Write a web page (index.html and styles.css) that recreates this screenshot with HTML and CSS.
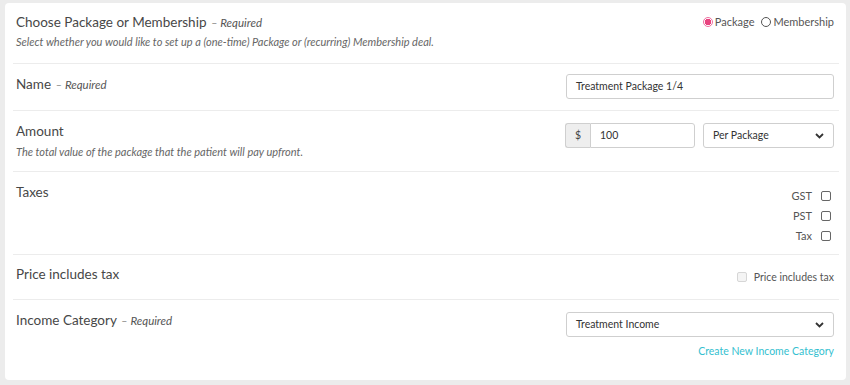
FILE: index.html
```html
<!DOCTYPE html>
<html>
<head>
<meta charset="utf-8">
<link rel="stylesheet" href="styles.css">
</head>
<body>
<div class="card">
  <div class="row row-type">
    <div class="left">
      <div class="title">Choose Package or Membership <span class="req">– Required</span></div>
      <div class="hint">Select whether you would like to set up a (one-time) Package or (recurring) Membership deal.</div>
    </div>
    <div class="right radios">
      <label class="radio"><span class="dot on"></span>Package</label>
      <label class="radio"><span class="dot"></span>Membership</label>
    </div>
  </div>

  <div class="row row-name">
    <div class="left">
      <div class="title">Name <span class="req">– Required</span></div>
    </div>
    <div class="right">
      <div class="input wide">Treatment Package 1/4</div>
    </div>
  </div>

  <div class="row row-amount">
    <div class="left">
      <div class="title">Amount</div>
      <div class="hint">The total value of the package that the patient will pay upfront.</div>
    </div>
    <div class="right amount">
      <div class="group">
        <span class="addon">$</span>
        <span class="input money">100</span>
      </div>
      <div class="input select per">Per Package
        <svg class="chev" width="9" height="6" viewBox="0 0 9 6"><path d="M1 1l3.5 3.5L8 1" fill="none" stroke="#333" stroke-width="1.8"/></svg>
      </div>
    </div>
  </div>

  <div class="row row-taxes">
    <div class="left">
      <div class="title">Taxes</div>
    </div>
    <div class="right taxes">
      <label class="check">GST<span class="box"></span></label>
      <label class="check">PST<span class="box"></span></label>
      <label class="check">Tax<span class="box"></span></label>
    </div>
  </div>

  <div class="row row-incl">
    <div class="left">
      <div class="title">Price includes tax</div>
    </div>
    <div class="right">
      <label class="check disabled"><span class="box"></span>Price includes tax</label>
    </div>
  </div>

  <div class="row row-income">
    <div class="left">
      <div class="title">Income Category <span class="req">– Required</span></div>
    </div>
    <div class="right income">
      <div class="input select wide">Treatment Income
        <svg class="chev" width="9" height="6" viewBox="0 0 9 6"><path d="M1 1l3.5 3.5L8 1" fill="none" stroke="#333" stroke-width="1.8"/></svg>
      </div>
      <a class="link">Create New Income Category</a>
    </div>
  </div>
</div>
</body>
</html>
```

FILE: styles.css
```css
html, body {
  margin: 0;
  padding: 0;
  background: #ececec;
  font-family: Lato, "Open Sans", Arial, sans-serif;
  color: #444;
}
.card {
  margin: 3px 4px 5px 5px;
  background: #fff;
  border-radius: 4px;
  padding: 0 7px 0 8px;
  height: 377px;
  box-sizing: border-box;
}
.row {
  display: flex;
  justify-content: space-between;
  align-items: flex-start;
  border-bottom: 1px solid #ececec;
  padding: 0 5px 0 3px;
  box-sizing: border-box;
}
.row:last-child { border-bottom: none; }
.title {
  font-size: 13.5px;
  line-height: 17px;
  color: #474747;
}
.req {
  font-size: 11.5px;
  font-style: italic;
  color: #555;
  margin-left: 1px;
}
.hint {
  font-size: 11px;
  font-style: italic;
  color: #666;
  line-height: 15px;
  margin-top: 4px;
}
.row-type { height: 61px; padding-top: 11px; }
.row-type .hint { margin-top: 3px; }
.row-type .radios { margin-top: -1px; }
.row-name { height: 47px; padding-top: 10px; }
.row-name .title { margin-top: 2px; }
.row-amount { height: 61px; padding-top: 12px; }
.row-taxes { height: 83px; padding-top: 12px; }
.row-taxes .taxes { margin-top: -1px; }
.row-incl { height: 45px; padding-top: 11px; }
.row-income { padding-top: 12px; height: 81px; }

.radios { display: flex; gap: 7px; font-size: 11px; color: #555; padding-top: 2px; }
.radio { display: flex; align-items: center; gap: 2px; }
.dot {
  width: 8px; height: 8px;
  border: 1px solid #555;
  border-radius: 50%;
  display: inline-block;
  box-sizing: content-box;
}
.dot.on {
  border-color: #ee6ea0;
  background: radial-gradient(circle, #e8437f 0 3px, #fff 3.5px);
}

.input {
  border: 1px solid #cfcfcf;
  border-radius: 3px;
  height: 25px;
  box-sizing: border-box;
  font-size: 10.5px;
  line-height: 23px;
  padding: 0 9px;
  color: #333;
  background: #fff;
}
.wide { width: 268px; }
.amount { display: flex; gap: 8px; }
.group { display: flex; width: 130px; }
.addon {
  width: 25px;
  height: 25px;
  box-sizing: border-box;
  border: 1px solid #cfcfcf;
  border-right: none;
  border-radius: 3px 0 0 3px;
  background: #eeeeee;
  font-size: 10.5px;
  line-height: 23px;
  text-align: center;
  color: #444;
}
.money { flex: 1; border-radius: 0 3px 3px 0; }
.select {
  display: flex;
  justify-content: space-between;
  align-items: center;
}
.per { width: 131px; }

.taxes {
  display: flex;
  flex-direction: column;
  align-items: flex-end;
  gap: 8px;
  padding-top: 7px;
  margin-right: 3px;
}
.check {
  display: flex;
  align-items: center;
  gap: 9px;
  font-size: 11px;
  color: #555;
  line-height: 12px;
}
.box {
  width: 10px; height: 10px;
  border: 1px solid #666;
  border-radius: 2px;
  box-sizing: border-box;
  display: inline-block;
}
.disabled .box { border-color: #d6d6d6; background: #f4f4f4; }
.disabled { padding-top: 5px; gap: 7px; font-size: 10.5px; }

.income { display: flex; flex-direction: column; align-items: flex-end; }
.link {
  margin-top: 8px;
  font-size: 10.5px;
  color: #35bfd0;
  text-decoration: none;
}
```
